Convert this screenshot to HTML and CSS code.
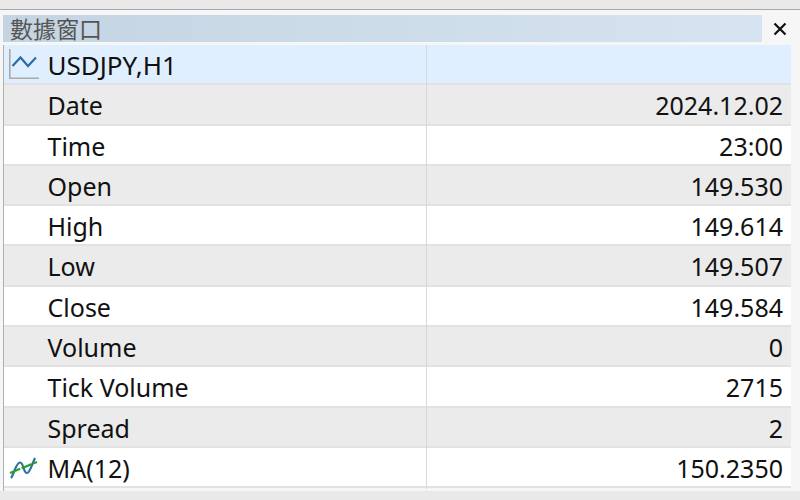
FILE: index.html
```html
<!DOCTYPE html>
<html lang="zh-Hant">
<head>
    <meta charset="UTF-8">
    <title>數據窗口</title>
    <link rel="stylesheet" href="styles.css">
</head>
<body>
    <div class="window">
        <div class="titlebar">
            <div class="title">數據窗口</div>
            <div class="close">
                <svg width="14" height="14" viewBox="0 0 14 14"><path d="M1.5 1.5 L12.5 12.5 M12.5 1.5 L1.5 12.5" stroke="#111" stroke-width="2.2" fill="none"/></svg>
            </div>
        </div>
        <div class="table">
            <div class="row head">
                <div class="name">
                    <svg class="icon" width="32" height="32" viewBox="0 0 32 32">
                        <path d="M0.8 0 V29.2 H30" stroke="#a9a9a9" stroke-width="1.6" fill="none"/>
                        <path d="M3.5 17 L11.5 8.5 L19 17 L27 8.5" stroke="#2a6fa8" stroke-width="2.2" fill="none"/>
                    </svg>
                    <span class="symbol">USDJPY,H1</span>
                </div>
                <div class="value"></div>
            </div>
            <div class="row alt"><div class="name">Date</div><div class="value">2024.12.02</div></div>
            <div class="row"><div class="name">Time</div><div class="value">23:00</div></div>
            <div class="row alt"><div class="name">Open</div><div class="value">149.530</div></div>
            <div class="row"><div class="name">High</div><div class="value">149.614</div></div>
            <div class="row alt"><div class="name">Low</div><div class="value">149.507</div></div>
            <div class="row"><div class="name">Close</div><div class="value">149.584</div></div>
            <div class="row alt"><div class="name">Volume</div><div class="value">0</div></div>
            <div class="row"><div class="name">Tick Volume</div><div class="value">2715</div></div>
            <div class="row alt"><div class="name">Spread</div><div class="value">2</div></div>
            <div class="row">
                <div class="name">
                    <svg class="icon" width="32" height="32" viewBox="0 0 32 32">
                        <path d="M2 26 C5 22 7 10.5 11 10.5 C15 10.5 14 21 18 21 C21 21 23 12 26 6" stroke="#2a6fa8" stroke-width="2.2" fill="none"/>
                        <path d="M1 21 L28 10" stroke="#2ca02c" stroke-width="2.2" stroke-dasharray="11 1.5" fill="none"/>
                    </svg>
                    MA(12)
                </div>
                <div class="value">150.2350</div>
            </div>
        </div>
    </div>
</body>
</html>
```

FILE: styles.css
```css
html, body {
    margin: 0;
    height: 100%;
}
body {
    width: 800px;
    height: 500px;
    overflow: hidden;
    background-color: #e9e9e9;
    font-family: "Noto Sans", "Open Sans", sans-serif;
    color: #111;
}
.window {
    margin-top: 9px;
    height: 482px;
    background-color: #f6f6f6;
    border-top: 1px solid #a8a8a8;
    padding-top: 5px;
    padding-left: 3px;
    box-sizing: border-box;
}
.titlebar {
    display: flex;
    height: 27px;
    margin-bottom: 3px;
}
.title {
    width: 759px;
    box-sizing: border-box;
    padding-left: 7px;
    background: linear-gradient(to right, #c5d4e2, #d6e4f1);
    font-family: "Noto Sans CJK TC", sans-serif;
    font-size: 23px;
    line-height: 27px;
    color: #555;
}
.close {
    flex: 1;
    display: flex;
    align-items: center;
    justify-content: center;
    padding-right: 3px;
}
.table {
    width: 787px;
    padding-bottom: 3px;
    border-left: 1px solid #b0b0b0;
}
.row {
    display: grid;
    grid-template-columns: 423px 1fr;
    height: 40.3px;
    box-sizing: border-box;
    background-color: #fff;
    border-bottom: 2px solid #e2e2e2;
    font-size: 25px;
    line-height: 41px;
}
.row.alt {
    background-color: #ebebeb;
}
.row.head {
    background-color: #dfefff;
}
.symbol {
    font-size: 26px;
}
.name {
    position: relative;
    padding-left: 43.5px;
    border-right: 1px solid #d8d8d8;
}
.value {
    text-align: right;
    padding-right: 8px;
}
.icon {
    position: absolute;
    left: 5px;
    top: 4px;
}
```
